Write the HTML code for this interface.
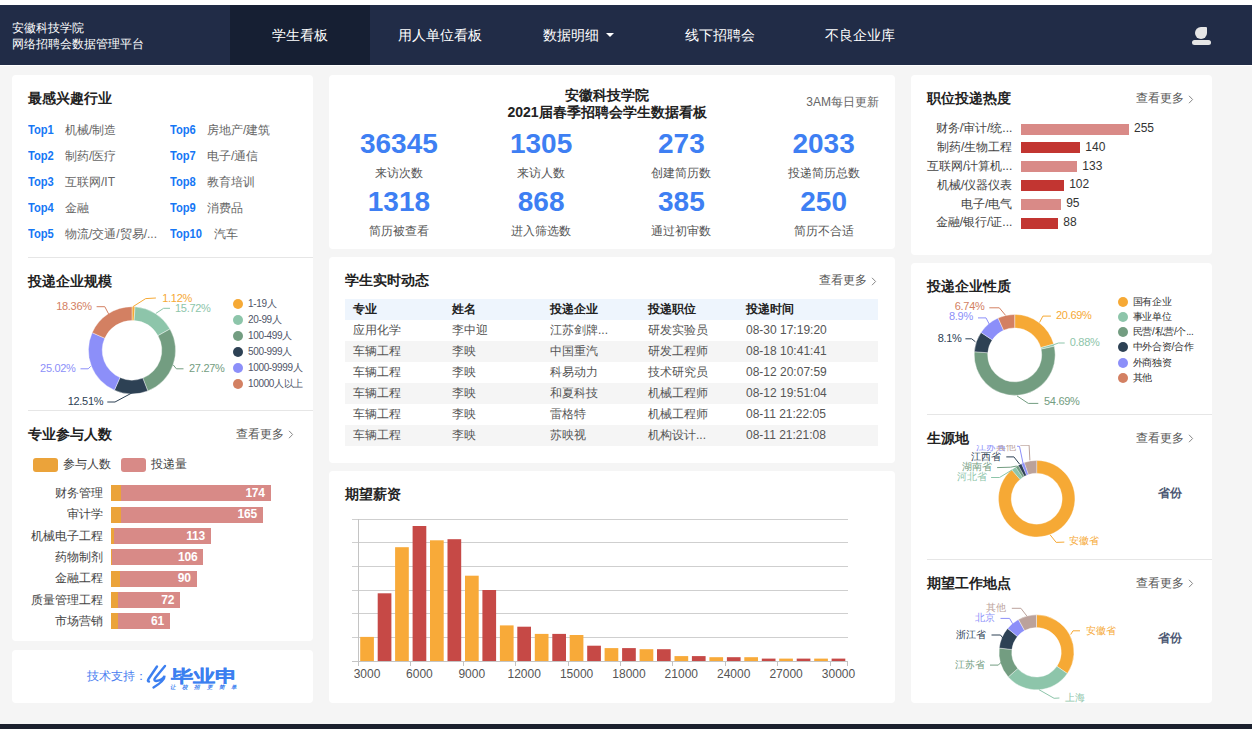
<!DOCTYPE html><html><head><meta charset="utf-8"><style>
html,body{margin:0;padding:0;}
body{width:1252px;height:729px;overflow:hidden;background:#f5f5f5;position:relative;font-family:"Liberation Sans", sans-serif;}
.t{position:absolute;white-space:nowrap;}
svg{overflow:visible}
</style></head><body>
<div style="position:absolute;left:0px;top:0px;width:1252px;height:5px;background:#fff;"></div>
<div style="position:absolute;left:0px;top:5px;width:1252px;height:60px;background:#212c47;"></div>
<div style="position:absolute;left:0px;top:65px;width:1252px;height:1px;background:#fff;"></div>
<div style="position:absolute;left:230px;top:5px;width:140px;height:60px;background:#161f33;"></div>
<div class="t" style="left:12.0px;top:20.0px;font-size:12px;line-height:16px;color:#fff;font-weight:500;">安徽科技学院</div>
<div class="t" style="left:12.0px;top:36.0px;font-size:12px;line-height:16px;color:#fff;font-weight:500;">网络招聘会数据管理平台</div>
<div class="t" style="left:100.0px;width:400px;text-align:center;top:25.0px;font-size:14px;line-height:20px;color:#fff;font-weight:500;">学生看板</div>
<div class="t" style="left:240.0px;width:400px;text-align:center;top:25.0px;font-size:14px;line-height:20px;color:#fff;font-weight:500;">用人单位看板</div>
<div class="t" style="left:371.0px;width:400px;text-align:center;top:25.0px;font-size:14px;line-height:20px;color:#fff;font-weight:500;">数据明细</div>
<div class="t" style="left:520.0px;width:400px;text-align:center;top:25.0px;font-size:14px;line-height:20px;color:#fff;font-weight:500;">线下招聘会</div>
<div class="t" style="left:660.0px;width:400px;text-align:center;top:25.0px;font-size:14px;line-height:20px;color:#fff;font-weight:500;">不良企业库</div>
<svg style="position:absolute;left:606px;top:33px" width="8" height="4" viewBox="0 0 8 4"><polygon points="0,0 8,0 4,4" fill="#fff"/></svg>
<div style="position:absolute;left:1195px;top:27px;width:12px;height:12px;background:#e6e6e6;border-radius:6px 1px 6px 6px;"></div>
<div style="position:absolute;left:1191.5px;top:39.7px;width:19.2px;height:5.2px;background:#e6e6e6;border-radius:3px;"></div>
<div style="position:absolute;left:0px;top:724px;width:1252px;height:5px;background:#1b202d;"></div>
<div style="position:absolute;left:12px;top:75px;width:301px;height:566px;background:#fff;border-radius:4px;"></div>
<div style="position:absolute;left:12px;top:650px;width:301px;height:53px;background:#fff;border-radius:4px;"></div>
<div style="position:absolute;left:329px;top:75px;width:566px;height:174px;background:#fff;border-radius:4px;"></div>
<div style="position:absolute;left:329px;top:257px;width:566px;height:206px;background:#fff;border-radius:4px;"></div>
<div style="position:absolute;left:329px;top:471px;width:566px;height:232px;background:#fff;border-radius:4px;"></div>
<div style="position:absolute;left:911px;top:75px;width:301px;height:180px;background:#fff;border-radius:4px;"></div>
<div style="position:absolute;left:911px;top:263px;width:301px;height:440px;background:#fff;border-radius:4px;"></div>
<div class="t" style="left:28.0px;top:88.4px;font-size:14px;line-height:20px;color:#222;font-weight:bold;">最感兴趣行业</div>
<div class="t" style="left:28.0px;top:121.7px;font-size:12px;line-height:17px;color:#1677f5;font-weight:bold;transform:scaleX(0.93);transform-origin:0 50%;">Top1</div>
<div class="t" style="left:65.0px;top:121.7px;font-size:12px;line-height:17px;color:#666;">机械/制造</div>
<div class="t" style="left:170.0px;top:121.7px;font-size:12px;line-height:17px;color:#1677f5;font-weight:bold;transform:scaleX(0.93);transform-origin:0 50%;">Top6</div>
<div class="t" style="left:207.0px;top:121.7px;font-size:12px;line-height:17px;color:#666;">房地产/建筑</div>
<div class="t" style="left:28.0px;top:147.7px;font-size:12px;line-height:17px;color:#1677f5;font-weight:bold;transform:scaleX(0.93);transform-origin:0 50%;">Top2</div>
<div class="t" style="left:65.0px;top:147.7px;font-size:12px;line-height:17px;color:#666;">制药/医疗</div>
<div class="t" style="left:170.0px;top:147.7px;font-size:12px;line-height:17px;color:#1677f5;font-weight:bold;transform:scaleX(0.93);transform-origin:0 50%;">Top7</div>
<div class="t" style="left:207.0px;top:147.7px;font-size:12px;line-height:17px;color:#666;">电子/通信</div>
<div class="t" style="left:28.0px;top:173.7px;font-size:12px;line-height:17px;color:#1677f5;font-weight:bold;transform:scaleX(0.93);transform-origin:0 50%;">Top3</div>
<div class="t" style="left:65.0px;top:173.7px;font-size:12px;line-height:17px;color:#666;">互联网/IT</div>
<div class="t" style="left:170.0px;top:173.7px;font-size:12px;line-height:17px;color:#1677f5;font-weight:bold;transform:scaleX(0.93);transform-origin:0 50%;">Top8</div>
<div class="t" style="left:207.0px;top:173.7px;font-size:12px;line-height:17px;color:#666;">教育培训</div>
<div class="t" style="left:28.0px;top:199.7px;font-size:12px;line-height:17px;color:#1677f5;font-weight:bold;transform:scaleX(0.93);transform-origin:0 50%;">Top4</div>
<div class="t" style="left:65.0px;top:199.7px;font-size:12px;line-height:17px;color:#666;">金融</div>
<div class="t" style="left:170.0px;top:199.7px;font-size:12px;line-height:17px;color:#1677f5;font-weight:bold;transform:scaleX(0.93);transform-origin:0 50%;">Top9</div>
<div class="t" style="left:207.0px;top:199.7px;font-size:12px;line-height:17px;color:#666;">消费品</div>
<div class="t" style="left:28.0px;top:225.7px;font-size:12px;line-height:17px;color:#1677f5;font-weight:bold;transform:scaleX(0.93);transform-origin:0 50%;">Top5</div>
<div class="t" style="left:65.0px;top:225.7px;font-size:12px;line-height:17px;color:#666;">物流/交通/贸易/...</div>
<div class="t" style="left:170.0px;top:225.7px;font-size:12px;line-height:17px;color:#1677f5;font-weight:bold;transform:scaleX(0.93);transform-origin:0 50%;">Top10</div>
<div class="t" style="left:214.0px;top:225.7px;font-size:12px;line-height:17px;color:#666;">汽车</div>
<div style="position:absolute;left:28px;top:257px;width:285px;height:1px;background:#e6e6e6;"></div>
<div class="t" style="left:28.0px;top:271.0px;font-size:14px;line-height:20px;color:#222;font-weight:bold;">投递企业规模</div>
<svg style="position:absolute;left:0;top:0" width="1252" height="729"><path d="M132.00,306.70 A43.6,43.6 0 0 1 135.07,306.81 L134.10,320.57 A29.8,29.8 0 0 0 132.00,320.50 Z" fill="#f6a935" stroke="#fff" stroke-width="0.4" stroke-linejoin="round"/><path d="M135.07,306.81 A43.6,43.6 0 0 1 169.99,328.91 L157.97,335.68 A29.8,29.8 0 0 0 134.10,320.57 Z" fill="#8dc5aa" stroke="#fff" stroke-width="0.4" stroke-linejoin="round"/><path d="M169.99,328.91 A43.6,43.6 0 0 1 147.77,390.95 L142.78,378.08 A29.8,29.8 0 0 0 157.97,335.68 Z" fill="#739d81" stroke="#fff" stroke-width="0.4" stroke-linejoin="round"/><path d="M147.77,390.95 A43.6,43.6 0 0 1 114.38,390.18 L119.96,377.56 A29.8,29.8 0 0 0 142.78,378.08 Z" fill="#2d4154" stroke="#fff" stroke-width="0.4" stroke-linejoin="round"/><path d="M114.38,390.18 A43.6,43.6 0 0 1 92.14,332.63 L104.76,338.22 A29.8,29.8 0 0 0 119.96,377.56 Z" fill="#8c8ff9" stroke="#fff" stroke-width="0.4" stroke-linejoin="round"/><path d="M92.14,332.63 A43.6,43.6 0 0 1 132.00,306.70 L132.00,320.50 A29.8,29.8 0 0 0 104.76,338.22 Z" fill="#d38062" stroke="#fff" stroke-width="0.4" stroke-linejoin="round"/><polyline points="132.9,306.7 145.7,298.6 155.9,298.0" fill="none" stroke="#f6a935" stroke-width="1"/><polyline points="155.9,313.4 163.6,308.3 170.0,308.3" fill="none" stroke="#8dc5aa" stroke-width="1"/><polyline points="173.3,365.0 176.4,368.8 183.5,368.8" fill="none" stroke="#739d81" stroke-width="1"/><polyline points="131.6,393.1 115.0,402.0 107.3,402.0" fill="none" stroke="#2d4154" stroke-width="1"/><polyline points="90.7,366.3 88.2,368.8 80.5,368.8" fill="none" stroke="#8c8ff9" stroke-width="1"/><polyline points="108.6,313.9 104.8,306.7 96.6,306.7" fill="none" stroke="#d38062" stroke-width="1"/></svg>
<div class="t" style="left:162.3px;top:290.5px;font-size:11px;line-height:15px;color:#f6a935;letter-spacing:-0.3px;">1.12%</div>
<div class="t" style="left:175.0px;top:300.8px;font-size:11px;line-height:15px;color:#8dc5aa;letter-spacing:-0.3px;">15.72%</div>
<div class="t" style="left:189.0px;top:360.5px;font-size:11px;line-height:15px;color:#739d81;letter-spacing:-0.3px;">27.27%</div>
<div class="t" style="left:67.7px;top:393.8px;font-size:11px;line-height:15px;color:#2d4154;letter-spacing:-0.3px;">12.51%</div>
<div class="t" style="left:40.1px;top:360.5px;font-size:11px;line-height:15px;color:#8c8ff9;letter-spacing:-0.3px;">25.02%</div>
<div class="t" style="left:56.2px;top:298.7px;font-size:11px;line-height:15px;color:#d38062;letter-spacing:-0.3px;">18.36%</div>
<div style="position:absolute;left:233px;top:298.5px;width:10px;height:10px;background:#f6a935;border-radius:5px;"></div>
<div class="t" style="left:248.0px;top:296.5px;font-size:10px;line-height:14px;color:#4f5568;letter-spacing:-0.35px;">1-19人</div>
<div style="position:absolute;left:233px;top:314.5px;width:10px;height:10px;background:#8dc5aa;border-radius:5px;"></div>
<div class="t" style="left:248.0px;top:312.5px;font-size:10px;line-height:14px;color:#4f5568;letter-spacing:-0.35px;">20-99人</div>
<div style="position:absolute;left:233px;top:330.5px;width:10px;height:10px;background:#739d81;border-radius:5px;"></div>
<div class="t" style="left:248.0px;top:328.5px;font-size:10px;line-height:14px;color:#4f5568;letter-spacing:-0.35px;">100-499人</div>
<div style="position:absolute;left:233px;top:346.5px;width:10px;height:10px;background:#2d4154;border-radius:5px;"></div>
<div class="t" style="left:248.0px;top:344.5px;font-size:10px;line-height:14px;color:#4f5568;letter-spacing:-0.35px;">500-999人</div>
<div style="position:absolute;left:233px;top:362.5px;width:10px;height:10px;background:#8c8ff9;border-radius:5px;"></div>
<div class="t" style="left:248.0px;top:360.5px;font-size:10px;line-height:14px;color:#4f5568;letter-spacing:-0.35px;">1000-9999人</div>
<div style="position:absolute;left:233px;top:378.5px;width:10px;height:10px;background:#d38062;border-radius:5px;"></div>
<div class="t" style="left:248.0px;top:376.5px;font-size:10px;line-height:14px;color:#4f5568;letter-spacing:-0.35px;">10000人以上</div>
<div style="position:absolute;left:28px;top:410px;width:285px;height:1px;background:#e6e6e6;"></div>
<div class="t" style="left:28.0px;top:424.0px;font-size:14px;line-height:20px;color:#222;font-weight:bold;">专业参与人数</div>
<div class="t" style="left:236.0px;top:425.5px;font-size:12px;line-height:17px;color:#555;">查看更多</div>
<svg style="position:absolute;left:287.5px;top:430.0px" width="6" height="9" viewBox="0 0 6 9"><polyline points="1,0.8 4.6,4.5 1,8.2" fill="none" stroke="#888" stroke-width="1"/></svg>
<div style="position:absolute;left:33px;top:458px;width:25px;height:13.6px;background:#eba33a;border-radius:3px;"></div>
<div class="t" style="left:63.0px;top:456.3px;font-size:12px;line-height:17px;color:#444;">参与人数</div>
<div style="position:absolute;left:121px;top:458px;width:25px;height:13.6px;background:#d88a87;border-radius:3px;"></div>
<div class="t" style="left:151.0px;top:456.3px;font-size:12px;line-height:17px;color:#444;">投递量</div>
<div style="position:absolute;left:110.7px;top:485.4px;width:160.1px;height:16px;background:#d88a87;"></div>
<div style="position:absolute;left:110.7px;top:485.4px;width:10.4px;height:16px;background:#eba33a;"></div>
<div class="t" style="left:-297.1px;width:400px;text-align:right;top:484.9px;font-size:12px;line-height:17px;color:#444;">财务管理</div>
<div class="t" style="left:-135.2px;width:400px;text-align:right;top:484.9px;font-size:12px;line-height:17px;color:#fff;font-weight:bold;letter-spacing:-0.2px;">174</div>
<div style="position:absolute;left:110.7px;top:506.7px;width:152.3px;height:16px;background:#d88a87;"></div>
<div style="position:absolute;left:110.7px;top:506.7px;width:10.4px;height:16px;background:#eba33a;"></div>
<div class="t" style="left:-297.1px;width:400px;text-align:right;top:506.2px;font-size:12px;line-height:17px;color:#444;">审计学</div>
<div class="t" style="left:-143.0px;width:400px;text-align:right;top:506.2px;font-size:12px;line-height:17px;color:#fff;font-weight:bold;letter-spacing:-0.2px;">165</div>
<div style="position:absolute;left:110.7px;top:528.1px;width:100.3px;height:16px;background:#d88a87;"></div>
<div style="position:absolute;left:110.7px;top:528.1px;width:3.7px;height:16px;background:#eba33a;"></div>
<div class="t" style="left:-297.1px;width:400px;text-align:right;top:527.6px;font-size:12px;line-height:17px;color:#444;">机械电子工程</div>
<div class="t" style="left:-195.0px;width:400px;text-align:right;top:527.6px;font-size:12px;line-height:17px;color:#fff;font-weight:bold;letter-spacing:-0.2px;">113</div>
<div style="position:absolute;left:110.7px;top:549.4px;width:92.8px;height:16px;background:#d88a87;"></div>
<div style="position:absolute;left:110.7px;top:549.4px;width:1.8px;height:16px;background:#eba33a;"></div>
<div class="t" style="left:-297.1px;width:400px;text-align:right;top:548.9px;font-size:12px;line-height:17px;color:#444;">药物制剂</div>
<div class="t" style="left:-202.5px;width:400px;text-align:right;top:548.9px;font-size:12px;line-height:17px;color:#fff;font-weight:bold;letter-spacing:-0.2px;">106</div>
<div style="position:absolute;left:110.7px;top:570.7px;width:86.0px;height:16px;background:#d88a87;"></div>
<div style="position:absolute;left:110.7px;top:570.7px;width:8.9px;height:16px;background:#eba33a;"></div>
<div class="t" style="left:-297.1px;width:400px;text-align:right;top:570.2px;font-size:12px;line-height:17px;color:#444;">金融工程</div>
<div class="t" style="left:-209.3px;width:400px;text-align:right;top:570.2px;font-size:12px;line-height:17px;color:#fff;font-weight:bold;letter-spacing:-0.2px;">90</div>
<div style="position:absolute;left:110.7px;top:592.0px;width:69.6px;height:16px;background:#d88a87;"></div>
<div style="position:absolute;left:110.7px;top:592.0px;width:7.8px;height:16px;background:#eba33a;"></div>
<div class="t" style="left:-297.1px;width:400px;text-align:right;top:591.5px;font-size:12px;line-height:17px;color:#444;">质量管理工程</div>
<div class="t" style="left:-225.7px;width:400px;text-align:right;top:591.5px;font-size:12px;line-height:17px;color:#fff;font-weight:bold;letter-spacing:-0.2px;">72</div>
<div style="position:absolute;left:110.7px;top:613.4px;width:59.2px;height:16px;background:#d88a87;"></div>
<div style="position:absolute;left:110.7px;top:613.4px;width:7.1px;height:16px;background:#eba33a;"></div>
<div class="t" style="left:-297.1px;width:400px;text-align:right;top:612.9px;font-size:12px;line-height:17px;color:#444;">市场营销</div>
<div class="t" style="left:-236.1px;width:400px;text-align:right;top:612.9px;font-size:12px;line-height:17px;color:#fff;font-weight:bold;letter-spacing:-0.2px;">61</div>
<div class="t" style="left:86.8px;top:668.0px;font-size:12px;line-height:17px;color:#4a7ef0;">技术支持：</div>
<svg style="position:absolute;left:140px;top:660px" width="105" height="35" viewBox="0 0 105 35">
<g fill="none" stroke="#3c7ff0" stroke-linecap="round">
<path d="M17,6.5 L8.5,19 Q7,21.5 9,21.5" stroke-width="2.4"/>
<path d="M25,6 L15.5,17.5 Q13,20.5 16,21 Q23,20 24.5,16 Q25,20.5 13.5,27.5" stroke-width="2.4"/>
</g>
<text x="30.5" y="22" font-size="17" font-weight="bold" fill="#3c7ff0" stroke="#3c7ff0" stroke-width="0.2" textLength="67" lengthAdjust="spacingAndGlyphs" font-family="Liberation Sans, sans-serif">毕业申</text>
<text x="30" y="28.5" font-size="5.5" font-weight="bold" font-style="italic" fill="#3c7ff0" textLength="67" lengthAdjust="spacing" font-family="Liberation Sans, sans-serif">让校招更简单</text>
</svg>
<div class="t" style="left:407.0px;width:400px;text-align:center;top:86.5px;font-size:14px;line-height:17px;color:#222;font-weight:bold;">安徽科技学院</div>
<div class="t" style="left:407.0px;width:400px;text-align:center;top:103.5px;font-size:14px;line-height:17px;color:#222;font-weight:bold;">2021届春季招聘会学生数据看板</div>
<div class="t" style="left:479.0px;width:400px;text-align:right;top:94.3px;font-size:12px;line-height:17px;color:#666;">3AM每日更新</div>
<div class="t" style="left:198.9px;width:400px;text-align:center;top:128.1px;font-size:28px;line-height:32px;color:#3e7ff3;font-weight:bold;">36345</div>
<div class="t" style="left:198.9px;width:400px;text-align:center;top:165.1px;font-size:12px;line-height:17px;color:#555;">来访次数</div>
<div class="t" style="left:341.1px;width:400px;text-align:center;top:128.1px;font-size:28px;line-height:32px;color:#3e7ff3;font-weight:bold;">1305</div>
<div class="t" style="left:341.1px;width:400px;text-align:center;top:165.1px;font-size:12px;line-height:17px;color:#555;">来访人数</div>
<div class="t" style="left:481.4px;width:400px;text-align:center;top:128.1px;font-size:28px;line-height:32px;color:#3e7ff3;font-weight:bold;">273</div>
<div class="t" style="left:481.4px;width:400px;text-align:center;top:165.1px;font-size:12px;line-height:17px;color:#555;">创建简历数</div>
<div class="t" style="left:623.6px;width:400px;text-align:center;top:128.1px;font-size:28px;line-height:32px;color:#3e7ff3;font-weight:bold;">2033</div>
<div class="t" style="left:623.6px;width:400px;text-align:center;top:165.1px;font-size:12px;line-height:17px;color:#555;">投递简历总数</div>
<div class="t" style="left:198.9px;width:400px;text-align:center;top:185.8px;font-size:28px;line-height:32px;color:#3e7ff3;font-weight:bold;">1318</div>
<div class="t" style="left:198.9px;width:400px;text-align:center;top:222.9px;font-size:12px;line-height:17px;color:#555;">简历被查看</div>
<div class="t" style="left:341.1px;width:400px;text-align:center;top:185.8px;font-size:28px;line-height:32px;color:#3e7ff3;font-weight:bold;">868</div>
<div class="t" style="left:341.1px;width:400px;text-align:center;top:222.9px;font-size:12px;line-height:17px;color:#555;">进入筛选数</div>
<div class="t" style="left:481.4px;width:400px;text-align:center;top:185.8px;font-size:28px;line-height:32px;color:#3e7ff3;font-weight:bold;">385</div>
<div class="t" style="left:481.4px;width:400px;text-align:center;top:222.9px;font-size:12px;line-height:17px;color:#555;">通过初审数</div>
<div class="t" style="left:623.6px;width:400px;text-align:center;top:185.8px;font-size:28px;line-height:32px;color:#3e7ff3;font-weight:bold;">250</div>
<div class="t" style="left:623.6px;width:400px;text-align:center;top:222.9px;font-size:12px;line-height:17px;color:#555;">简历不合适</div>
<div class="t" style="left:345.0px;top:270.2px;font-size:14px;line-height:20px;color:#222;font-weight:bold;">学生实时动态</div>
<div class="t" style="left:819.0px;top:272.1px;font-size:12px;line-height:17px;color:#555;">查看更多</div>
<svg style="position:absolute;left:870.5px;top:276.6px" width="6" height="9" viewBox="0 0 6 9"><polyline points="1,0.8 4.6,4.5 1,8.2" fill="none" stroke="#888" stroke-width="1"/></svg>
<div style="position:absolute;left:345px;top:299px;width:533px;height:21px;background:#eef5fd;"></div>
<div class="t" style="left:353.0px;top:301.0px;font-size:12px;line-height:17px;color:#222;font-weight:bold;">专业</div>
<div class="t" style="left:451.8px;top:301.0px;font-size:12px;line-height:17px;color:#222;font-weight:bold;">姓名</div>
<div class="t" style="left:550.0px;top:301.0px;font-size:12px;line-height:17px;color:#222;font-weight:bold;">投递企业</div>
<div class="t" style="left:648.0px;top:301.0px;font-size:12px;line-height:17px;color:#222;font-weight:bold;">投递职位</div>
<div class="t" style="left:746.0px;top:301.0px;font-size:12px;line-height:17px;color:#222;font-weight:bold;">投递时间</div>
<div class="t" style="left:353.0px;top:322.0px;font-size:12px;line-height:17px;color:#555;">应用化学</div>
<div class="t" style="left:451.8px;top:322.0px;font-size:12px;line-height:17px;color:#555;">李中迎</div>
<div class="t" style="left:550.0px;top:322.0px;font-size:12px;line-height:17px;color:#555;">江苏剑牌...</div>
<div class="t" style="left:648.0px;top:322.0px;font-size:12px;line-height:17px;color:#555;">研发实验员</div>
<div class="t" style="left:746.0px;top:322.0px;font-size:12px;line-height:17px;color:#555;">08-30 17:19:20</div>
<div style="position:absolute;left:345px;top:341px;width:533px;height:21px;background:#f5f5f5;"></div>
<div class="t" style="left:353.0px;top:343.0px;font-size:12px;line-height:17px;color:#555;">车辆工程</div>
<div class="t" style="left:451.8px;top:343.0px;font-size:12px;line-height:17px;color:#555;">李映</div>
<div class="t" style="left:550.0px;top:343.0px;font-size:12px;line-height:17px;color:#555;">中国重汽</div>
<div class="t" style="left:648.0px;top:343.0px;font-size:12px;line-height:17px;color:#555;">研发工程师</div>
<div class="t" style="left:746.0px;top:343.0px;font-size:12px;line-height:17px;color:#555;">08-18 10:41:41</div>
<div class="t" style="left:353.0px;top:364.0px;font-size:12px;line-height:17px;color:#555;">车辆工程</div>
<div class="t" style="left:451.8px;top:364.0px;font-size:12px;line-height:17px;color:#555;">李映</div>
<div class="t" style="left:550.0px;top:364.0px;font-size:12px;line-height:17px;color:#555;">科易动力</div>
<div class="t" style="left:648.0px;top:364.0px;font-size:12px;line-height:17px;color:#555;">技术研究员</div>
<div class="t" style="left:746.0px;top:364.0px;font-size:12px;line-height:17px;color:#555;">08-12 20:07:59</div>
<div style="position:absolute;left:345px;top:383px;width:533px;height:21px;background:#f5f5f5;"></div>
<div class="t" style="left:353.0px;top:385.0px;font-size:12px;line-height:17px;color:#555;">车辆工程</div>
<div class="t" style="left:451.8px;top:385.0px;font-size:12px;line-height:17px;color:#555;">李映</div>
<div class="t" style="left:550.0px;top:385.0px;font-size:12px;line-height:17px;color:#555;">和夏科技</div>
<div class="t" style="left:648.0px;top:385.0px;font-size:12px;line-height:17px;color:#555;">机械工程师</div>
<div class="t" style="left:746.0px;top:385.0px;font-size:12px;line-height:17px;color:#555;">08-12 19:51:04</div>
<div class="t" style="left:353.0px;top:406.0px;font-size:12px;line-height:17px;color:#555;">车辆工程</div>
<div class="t" style="left:451.8px;top:406.0px;font-size:12px;line-height:17px;color:#555;">李映</div>
<div class="t" style="left:550.0px;top:406.0px;font-size:12px;line-height:17px;color:#555;">雷格特</div>
<div class="t" style="left:648.0px;top:406.0px;font-size:12px;line-height:17px;color:#555;">机械工程师</div>
<div class="t" style="left:746.0px;top:406.0px;font-size:12px;line-height:17px;color:#555;">08-11 21:22:05</div>
<div style="position:absolute;left:345px;top:425px;width:533px;height:21px;background:#f5f5f5;"></div>
<div class="t" style="left:353.0px;top:427.0px;font-size:12px;line-height:17px;color:#555;">车辆工程</div>
<div class="t" style="left:451.8px;top:427.0px;font-size:12px;line-height:17px;color:#555;">李映</div>
<div class="t" style="left:550.0px;top:427.0px;font-size:12px;line-height:17px;color:#555;">苏映视</div>
<div class="t" style="left:648.0px;top:427.0px;font-size:12px;line-height:17px;color:#555;">机构设计...</div>
<div class="t" style="left:746.0px;top:427.0px;font-size:12px;line-height:17px;color:#555;">08-11 21:21:08</div>
<div class="t" style="left:345.0px;top:484.0px;font-size:14px;line-height:20px;color:#222;font-weight:bold;">期望薪资</div>
<svg style="position:absolute;left:0;top:0" width="1252" height="729"><line x1="352" y1="519.5" x2="848" y2="519.5" stroke="#cfcfcf" stroke-width="1"/><line x1="352" y1="542.5" x2="848" y2="542.5" stroke="#cfcfcf" stroke-width="1"/><line x1="352" y1="566.5" x2="848" y2="566.5" stroke="#cfcfcf" stroke-width="1"/><line x1="352" y1="590.5" x2="848" y2="590.5" stroke="#cfcfcf" stroke-width="1"/><line x1="352" y1="613.5" x2="848" y2="613.5" stroke="#cfcfcf" stroke-width="1"/><line x1="352" y1="637.5" x2="848" y2="637.5" stroke="#cfcfcf" stroke-width="1"/><line x1="352" y1="661.5" x2="848" y2="661.5" stroke="#c4c4c4" stroke-width="1"/><line x1="358.5" y1="519" x2="358.5" y2="661" stroke="#c4c4c4" stroke-width="1"/><line x1="358.5" y1="661" x2="358.5" y2="666" stroke="#c4c4c4" stroke-width="1"/><line x1="410.5" y1="661" x2="410.5" y2="666" stroke="#c4c4c4" stroke-width="1"/><line x1="463.5" y1="661" x2="463.5" y2="666" stroke="#c4c4c4" stroke-width="1"/><line x1="515.5" y1="661" x2="515.5" y2="666" stroke="#c4c4c4" stroke-width="1"/><line x1="568.5" y1="661" x2="568.5" y2="666" stroke="#c4c4c4" stroke-width="1"/><line x1="620.5" y1="661" x2="620.5" y2="666" stroke="#c4c4c4" stroke-width="1"/><line x1="672.5" y1="661" x2="672.5" y2="666" stroke="#c4c4c4" stroke-width="1"/><line x1="725.5" y1="661" x2="725.5" y2="666" stroke="#c4c4c4" stroke-width="1"/><line x1="777.5" y1="661" x2="777.5" y2="666" stroke="#c4c4c4" stroke-width="1"/><line x1="830.5" y1="661" x2="830.5" y2="666" stroke="#c4c4c4" stroke-width="1"/><line x1="847.5" y1="661" x2="847.5" y2="666" stroke="#c4c4c4" stroke-width="1"/><rect x="360.2" y="636.9" width="13.7" height="24.1" fill="#f8aa39"/><rect x="377.7" y="593.3" width="13.7" height="67.7" fill="#c64946"/><rect x="395.1" y="547.2" width="13.7" height="113.8" fill="#f8aa39"/><rect x="412.6" y="526" width="13.7" height="135.0" fill="#c64946"/><rect x="430.0" y="540.3" width="13.7" height="120.7" fill="#f8aa39"/><rect x="447.5" y="539.2" width="13.7" height="121.8" fill="#c64946"/><rect x="465.0" y="575.7" width="13.7" height="85.3" fill="#f8aa39"/><rect x="482.4" y="590" width="13.7" height="71.0" fill="#c64946"/><rect x="499.9" y="625.4" width="13.7" height="35.6" fill="#f8aa39"/><rect x="517.3" y="626.7" width="13.7" height="34.3" fill="#c64946"/><rect x="534.8" y="633.9" width="13.7" height="27.1" fill="#f8aa39"/><rect x="552.3" y="633.9" width="13.7" height="27.1" fill="#c64946"/><rect x="569.7" y="635" width="13.7" height="26.0" fill="#f8aa39"/><rect x="587.2" y="645.7" width="13.7" height="15.3" fill="#c64946"/><rect x="604.6" y="648.1" width="13.7" height="12.9" fill="#f8aa39"/><rect x="622.1" y="648.1" width="13.7" height="12.9" fill="#c64946"/><rect x="639.6" y="649.2" width="13.7" height="11.8" fill="#f8aa39"/><rect x="657.0" y="649.2" width="13.7" height="11.8" fill="#c64946"/><rect x="674.5" y="656.1" width="13.7" height="4.9" fill="#f8aa39"/><rect x="691.9" y="656.1" width="13.7" height="4.9" fill="#c64946"/><rect x="709.4" y="657.2" width="13.7" height="3.8" fill="#f8aa39"/><rect x="726.9" y="657.2" width="13.7" height="3.8" fill="#c64946"/><rect x="744.3" y="657.2" width="13.7" height="3.8" fill="#f8aa39"/><rect x="761.8" y="658.6" width="13.7" height="2.4" fill="#c64946"/><rect x="779.2" y="658.6" width="13.7" height="2.4" fill="#f8aa39"/><rect x="796.7" y="658.6" width="13.7" height="2.4" fill="#c64946"/><rect x="814.2" y="658.6" width="13.7" height="2.4" fill="#f8aa39"/><rect x="831.6" y="658.6" width="13.7" height="2.4" fill="#c64946"/></svg>
<div class="t" style="left:167.0px;width:400px;text-align:center;top:665.7px;font-size:12px;line-height:17px;color:#555;">3000</div>
<div class="t" style="left:219.4px;width:400px;text-align:center;top:665.7px;font-size:12px;line-height:17px;color:#555;">6000</div>
<div class="t" style="left:271.8px;width:400px;text-align:center;top:665.7px;font-size:12px;line-height:17px;color:#555;">9000</div>
<div class="t" style="left:324.2px;width:400px;text-align:center;top:665.7px;font-size:12px;line-height:17px;color:#555;">12000</div>
<div class="t" style="left:376.6px;width:400px;text-align:center;top:665.7px;font-size:12px;line-height:17px;color:#555;">15000</div>
<div class="t" style="left:429.0px;width:400px;text-align:center;top:665.7px;font-size:12px;line-height:17px;color:#555;">18000</div>
<div class="t" style="left:481.3px;width:400px;text-align:center;top:665.7px;font-size:12px;line-height:17px;color:#555;">21000</div>
<div class="t" style="left:533.7px;width:400px;text-align:center;top:665.7px;font-size:12px;line-height:17px;color:#555;">24000</div>
<div class="t" style="left:586.1px;width:400px;text-align:center;top:665.7px;font-size:12px;line-height:17px;color:#555;">27000</div>
<div class="t" style="left:638.5px;width:400px;text-align:center;top:665.7px;font-size:12px;line-height:17px;color:#555;">30000</div>
<div class="t" style="left:927.0px;top:88.4px;font-size:14px;line-height:20px;color:#222;font-weight:bold;">职位投递热度</div>
<div class="t" style="left:1136.0px;top:90.0px;font-size:12px;line-height:17px;color:#555;">查看更多</div>
<svg style="position:absolute;left:1187.5px;top:94.5px" width="6" height="9" viewBox="0 0 6 9"><polyline points="1,0.8 4.6,4.5 1,8.2" fill="none" stroke="#888" stroke-width="1"/></svg>
<div style="position:absolute;left:1021px;top:123.5px;width:108.0px;height:11px;background:#d98a87;"></div>
<div class="t" style="left:612.3px;width:400px;text-align:right;top:120.2px;font-size:12px;line-height:17px;color:#444;">财务/审计/统...</div>
<div class="t" style="left:1134.0px;top:119.9px;font-size:12px;line-height:17px;color:#333;">255</div>
<div style="position:absolute;left:1021px;top:142.3px;width:59.3px;height:11px;background:#c23531;"></div>
<div class="t" style="left:612.3px;width:400px;text-align:right;top:139.0px;font-size:12px;line-height:17px;color:#444;">制药/生物工程</div>
<div class="t" style="left:1085.3px;top:138.7px;font-size:12px;line-height:17px;color:#333;">140</div>
<div style="position:absolute;left:1021px;top:161.1px;width:56.3px;height:11px;background:#d98a87;"></div>
<div class="t" style="left:612.3px;width:400px;text-align:right;top:157.8px;font-size:12px;line-height:17px;color:#444;">互联网/计算机...</div>
<div class="t" style="left:1082.3px;top:157.5px;font-size:12px;line-height:17px;color:#333;">133</div>
<div style="position:absolute;left:1021px;top:180.0px;width:43.2px;height:11px;background:#c23531;"></div>
<div class="t" style="left:612.3px;width:400px;text-align:right;top:176.7px;font-size:12px;line-height:17px;color:#444;">机械/仪器仪表</div>
<div class="t" style="left:1069.2px;top:176.4px;font-size:12px;line-height:17px;color:#333;">102</div>
<div style="position:absolute;left:1021px;top:198.8px;width:40.2px;height:11px;background:#d98a87;"></div>
<div class="t" style="left:612.3px;width:400px;text-align:right;top:195.5px;font-size:12px;line-height:17px;color:#444;">电子/电气</div>
<div class="t" style="left:1066.2px;top:195.2px;font-size:12px;line-height:17px;color:#333;">95</div>
<div style="position:absolute;left:1021px;top:217.6px;width:37.3px;height:11px;background:#c23531;"></div>
<div class="t" style="left:612.3px;width:400px;text-align:right;top:214.3px;font-size:12px;line-height:17px;color:#444;">金融/银行/证...</div>
<div class="t" style="left:1063.3px;top:214.0px;font-size:12px;line-height:17px;color:#333;">88</div>
<div class="t" style="left:927.0px;top:275.7px;font-size:14px;line-height:20px;color:#222;font-weight:bold;">投递企业性质</div>
<svg style="position:absolute;left:0;top:0" width="1252" height="729"><path d="M1014.70,314.40 A40.5,40.5 0 0 1 1053.72,344.07 L1040.72,347.68 A27,27 0 0 0 1014.70,327.90 Z" fill="#f6a935" stroke="#fff" stroke-width="0.4" stroke-linejoin="round"/><path d="M1053.72,344.07 A40.5,40.5 0 0 1 1054.26,346.24 L1041.08,349.13 A27,27 0 0 0 1040.72,347.68 Z" fill="#8dc5aa" stroke="#fff" stroke-width="0.4" stroke-linejoin="round"/><path d="M1054.26,346.24 A40.5,40.5 0 1 1 974.33,351.70 L987.78,352.76 A27,27 0 1 0 1041.08,349.13 Z" fill="#739d81" stroke="#fff" stroke-width="0.4" stroke-linejoin="round"/><path d="M974.33,351.70 A40.5,40.5 0 0 1 981.00,332.43 L992.24,339.92 A27,27 0 0 0 987.78,352.76 Z" fill="#2d4154" stroke="#fff" stroke-width="0.4" stroke-linejoin="round"/><path d="M981.00,332.43 A40.5,40.5 0 0 1 998.06,317.98 L1003.60,330.29 A27,27 0 0 0 992.24,339.92 Z" fill="#8c8ff9" stroke="#fff" stroke-width="0.4" stroke-linejoin="round"/><path d="M998.06,317.98 A40.5,40.5 0 0 1 1014.70,314.40 L1014.70,327.90 A27,27 0 0 0 1003.60,330.29 Z" fill="#d38062" stroke="#fff" stroke-width="0.4" stroke-linejoin="round"/><polyline points="1039.6,322.4 1042.9,316.1 1050.9,316.1" fill="none" stroke="#f6a935" stroke-width="1"/><polyline points="1053.4,344.8 1058.5,343.0 1064.7,343.0" fill="none" stroke="#8dc5aa" stroke-width="1"/><polyline points="1017.0,395.9 1028.3,403.4 1038.3,403.4" fill="none" stroke="#739d81" stroke-width="1"/><polyline points="975.4,341.8 971.7,338.8 965.4,338.8" fill="none" stroke="#2d4154" stroke-width="1"/><polyline points="989.3,324.2 986.0,317.9 978.0,317.9" fill="none" stroke="#8c8ff9" stroke-width="1"/><polyline points="1005.6,315.4 999.3,307.8 989.3,307.8" fill="none" stroke="#d38062" stroke-width="1"/></svg>
<div class="t" style="left:1056.0px;top:307.9px;font-size:11px;line-height:15px;color:#f6a935;letter-spacing:-0.3px;">20.69%</div>
<div class="t" style="left:1069.8px;top:335.0px;font-size:11px;line-height:15px;color:#8dc5aa;letter-spacing:-0.3px;">0.88%</div>
<div class="t" style="left:1044.0px;top:394.2px;font-size:11px;line-height:15px;color:#739d81;letter-spacing:-0.3px;">54.69%</div>
<div class="t" style="left:937.7px;top:330.5px;font-size:11px;line-height:15px;color:#2d4154;letter-spacing:-0.3px;">8.1%</div>
<div class="t" style="left:949.0px;top:309.1px;font-size:11px;line-height:15px;color:#8c8ff9;letter-spacing:-0.3px;">8.9%</div>
<div class="t" style="left:954.8px;top:299.1px;font-size:11px;line-height:15px;color:#d38062;letter-spacing:-0.3px;">6.74%</div>
<div style="position:absolute;left:1118px;top:297.0px;width:10px;height:10px;background:#f6a935;border-radius:5px;"></div>
<div class="t" style="left:1132.7px;top:295.0px;font-size:10px;line-height:14px;color:#333;letter-spacing:-0.3px;">国有企业</div>
<div style="position:absolute;left:1118px;top:312.1px;width:10px;height:10px;background:#8dc5aa;border-radius:5px;"></div>
<div class="t" style="left:1132.7px;top:310.1px;font-size:10px;line-height:14px;color:#333;letter-spacing:-0.3px;">事业单位</div>
<div style="position:absolute;left:1118px;top:327.3px;width:10px;height:10px;background:#739d81;border-radius:5px;"></div>
<div class="t" style="left:1132.7px;top:325.3px;font-size:10px;line-height:14px;color:#333;letter-spacing:-0.3px;">民营/私营/个...</div>
<div style="position:absolute;left:1118px;top:342.4px;width:10px;height:10px;background:#2d4154;border-radius:5px;"></div>
<div class="t" style="left:1132.7px;top:340.4px;font-size:10px;line-height:14px;color:#333;letter-spacing:-0.3px;">中外合资/合作</div>
<div style="position:absolute;left:1118px;top:357.6px;width:10px;height:10px;background:#8c8ff9;border-radius:5px;"></div>
<div class="t" style="left:1132.7px;top:355.6px;font-size:10px;line-height:14px;color:#333;letter-spacing:-0.3px;">外商独资</div>
<div style="position:absolute;left:1118px;top:372.8px;width:10px;height:10px;background:#d38062;border-radius:5px;"></div>
<div class="t" style="left:1132.7px;top:370.8px;font-size:10px;line-height:14px;color:#333;letter-spacing:-0.3px;">其他</div>
<div style="position:absolute;left:927px;top:414px;width:285px;height:1px;background:#e6e6e6;"></div>
<div class="t" style="left:927.0px;top:428.2px;font-size:14px;line-height:20px;color:#222;font-weight:bold;">生源地</div>
<div class="t" style="left:1136.0px;top:429.7px;font-size:12px;line-height:17px;color:#555;">查看更多</div>
<svg style="position:absolute;left:1187.5px;top:434.2px" width="6" height="9" viewBox="0 0 6 9"><polyline points="1,0.8 4.6,4.5 1,8.2" fill="none" stroke="#888" stroke-width="1"/></svg>
<div style="position:absolute;left:900px;top:445px;width:312px;height:120px;overflow:hidden"><svg style="position:absolute;left:-900px;top:-445px" width="1252" height="729"><path d="M1036.70,460.50 A38.2,38.2 0 1 1 1011.75,469.78 L1020.04,479.39 A25.5,25.5 0 1 0 1036.70,473.20 Z" fill="#f6a935" stroke="#fff" stroke-width="0.3" stroke-linejoin="round"/><path d="M1011.75,469.78 A38.2,38.2 0 0 1 1015.57,466.88 L1022.59,477.46 A25.5,25.5 0 0 0 1020.04,479.39 Z" fill="#8dc5aa" stroke="#fff" stroke-width="0.3" stroke-linejoin="round"/><path d="M1015.57,466.88 A38.2,38.2 0 0 1 1018.30,465.23 L1024.42,476.35 A25.5,25.5 0 0 0 1022.59,477.46 Z" fill="#739d81" stroke="#fff" stroke-width="0.3" stroke-linejoin="round"/><path d="M1018.30,465.23 A38.2,38.2 0 0 1 1021.53,463.64 L1026.57,475.30 A25.5,25.5 0 0 0 1024.42,476.35 Z" fill="#2d4154" stroke="#fff" stroke-width="0.3" stroke-linejoin="round"/><path d="M1021.53,463.64 A38.2,38.2 0 0 1 1024.33,462.56 L1028.44,474.57 A25.5,25.5 0 0 0 1026.57,475.30 Z" fill="#8c8ff9" stroke="#fff" stroke-width="0.3" stroke-linejoin="round"/><path d="M1024.33,462.56 A38.2,38.2 0 0 1 1036.70,460.50 L1036.70,473.20 A25.5,25.5 0 0 0 1028.44,474.57 Z" fill="#bba29b" stroke="#fff" stroke-width="0.3" stroke-linejoin="round"/><polyline points="1050.1,534.8 1056.2,542.4 1064.3,542.1" fill="none" stroke="#f6a935" stroke-width="1"/><polyline points="1011.9,470.0 999.5,477.5 991.1,477.5" fill="none" stroke="#8dc5aa" stroke-width="1"/><polyline points="1016.7,466.0 1010.7,467.2 997.1,467.6" fill="none" stroke="#739d81" stroke-width="1"/><polyline points="1019.5,464.0 1013.9,456.9 1006.3,456.9" fill="none" stroke="#2d4154" stroke-width="1"/><polyline points="1023.0,463.2 1019.5,446.4 1017.0,446.2" fill="none" stroke="#8c8ff9" stroke-width="1"/><polyline points="1029.9,460.4 1029.1,445.2 1020.3,445.2" fill="none" stroke="#bba29b" stroke-width="1"/></svg>
<div class="t" style="left:76.4px;top:-4.6px;font-size:10px;line-height:14px;color:#8c8ff9">江苏省</div>
<div class="t" style="left:96.3px;top:-4.8px;font-size:10px;line-height:14px;color:#bba29b">其他</div>
</div>
<div class="t" style="left:1068.8px;top:534.1px;font-size:10px;line-height:14px;color:#f6a935;">安徽省</div>
<div class="t" style="left:957.2px;top:469.7px;font-size:10px;line-height:14px;color:#8dc5aa;">河北省</div>
<div class="t" style="left:962.0px;top:459.8px;font-size:10px;line-height:14px;color:#739d81;">湖南省</div>
<div class="t" style="left:971.2px;top:449.8px;font-size:10px;line-height:14px;color:#2d4154;">江西省</div>
<div class="t" style="left:1157.8px;top:485.3px;font-size:12px;line-height:17px;color:#4d5873;font-weight:bold;">省份</div>
<div style="position:absolute;left:927px;top:559px;width:285px;height:1px;background:#e6e6e6;"></div>
<div class="t" style="left:927.0px;top:573.2px;font-size:14px;line-height:20px;color:#222;font-weight:bold;">期望工作地点</div>
<div class="t" style="left:1136.0px;top:574.7px;font-size:12px;line-height:17px;color:#555;">查看更多</div>
<svg style="position:absolute;left:1187.5px;top:579.2px" width="6" height="9" viewBox="0 0 6 9"><polyline points="1,0.8 4.6,4.5 1,8.2" fill="none" stroke="#888" stroke-width="1"/></svg>
<svg style="position:absolute;left:0;top:0" width="1252" height="729"><path d="M1036.50,614.80 A37.5,37.5 0 0 1 1067.38,673.57 L1056.88,666.34 A24.75,24.75 0 0 0 1036.50,627.55 Z" fill="#f6a935" stroke="#fff" stroke-width="0.4" stroke-linejoin="round"/><path d="M1067.38,673.57 A37.5,37.5 0 0 1 1008.22,676.92 L1017.83,668.55 A24.75,24.75 0 0 0 1056.88,666.34 Z" fill="#8dc5aa" stroke="#fff" stroke-width="0.4" stroke-linejoin="round"/><path d="M1008.22,676.92 A37.5,37.5 0 0 1 999.24,648.07 L1011.91,649.51 A24.75,24.75 0 0 0 1017.83,668.55 Z" fill="#739d81" stroke="#fff" stroke-width="0.4" stroke-linejoin="round"/><path d="M999.24,648.07 A37.5,37.5 0 0 1 1007.61,628.40 L1017.43,636.52 A24.75,24.75 0 0 0 1011.91,649.51 Z" fill="#2d4154" stroke="#fff" stroke-width="0.4" stroke-linejoin="round"/><path d="M1007.61,628.40 A37.5,37.5 0 0 1 1018.43,619.44 L1024.58,630.61 A24.75,24.75 0 0 0 1017.43,636.52 Z" fill="#8c8ff9" stroke="#fff" stroke-width="0.4" stroke-linejoin="round"/><path d="M1018.43,619.44 A37.5,37.5 0 0 1 1036.50,614.80 L1036.50,627.55 A24.75,24.75 0 0 0 1024.58,630.61 Z" fill="#bba29b" stroke="#fff" stroke-width="0.4" stroke-linejoin="round"/><polyline points="1070.7,634.5 1073.0,630.8 1080.0,630.8" fill="none" stroke="#f6a935" stroke-width="1"/><polyline points="1039.0,689.7 1054.1,698.3 1059.4,698.0" fill="none" stroke="#8dc5aa" stroke-width="1"/><polyline points="1001.3,662.1 998.3,665.1 990.0,665.1" fill="none" stroke="#739d81" stroke-width="1"/><polyline points="1002.8,638.0 1000.5,635.0 991.5,635.0" fill="none" stroke="#2d4154" stroke-width="1"/><polyline points="1012.6,623.7 1009.6,618.4 1000.5,618.4" fill="none" stroke="#8c8ff9" stroke-width="1"/><polyline points="1026.9,616.1 1020.9,608.3 1011.8,608.3" fill="none" stroke="#bba29b" stroke-width="1"/></svg>
<div class="t" style="left:1085.8px;top:623.8px;font-size:10px;line-height:14px;color:#f6a935;">安徽省</div>
<div class="t" style="left:1064.6px;top:690.6px;font-size:10px;line-height:14px;color:#8dc5aa;">上海</div>
<div class="t" style="left:955.3px;top:657.7px;font-size:10px;line-height:14px;color:#739d81;">江苏省</div>
<div class="t" style="left:956.0px;top:627.5px;font-size:10px;line-height:14px;color:#2d4154;">浙江省</div>
<div class="t" style="left:974.9px;top:610.9px;font-size:10px;line-height:14px;color:#8c8ff9;">北京</div>
<div class="t" style="left:986.2px;top:600.8px;font-size:10px;line-height:14px;color:#bba29b;">其他</div>
<div class="t" style="left:1157.8px;top:630.3px;font-size:12px;line-height:17px;color:#4d5873;font-weight:bold;">省份</div>
</body></html>
